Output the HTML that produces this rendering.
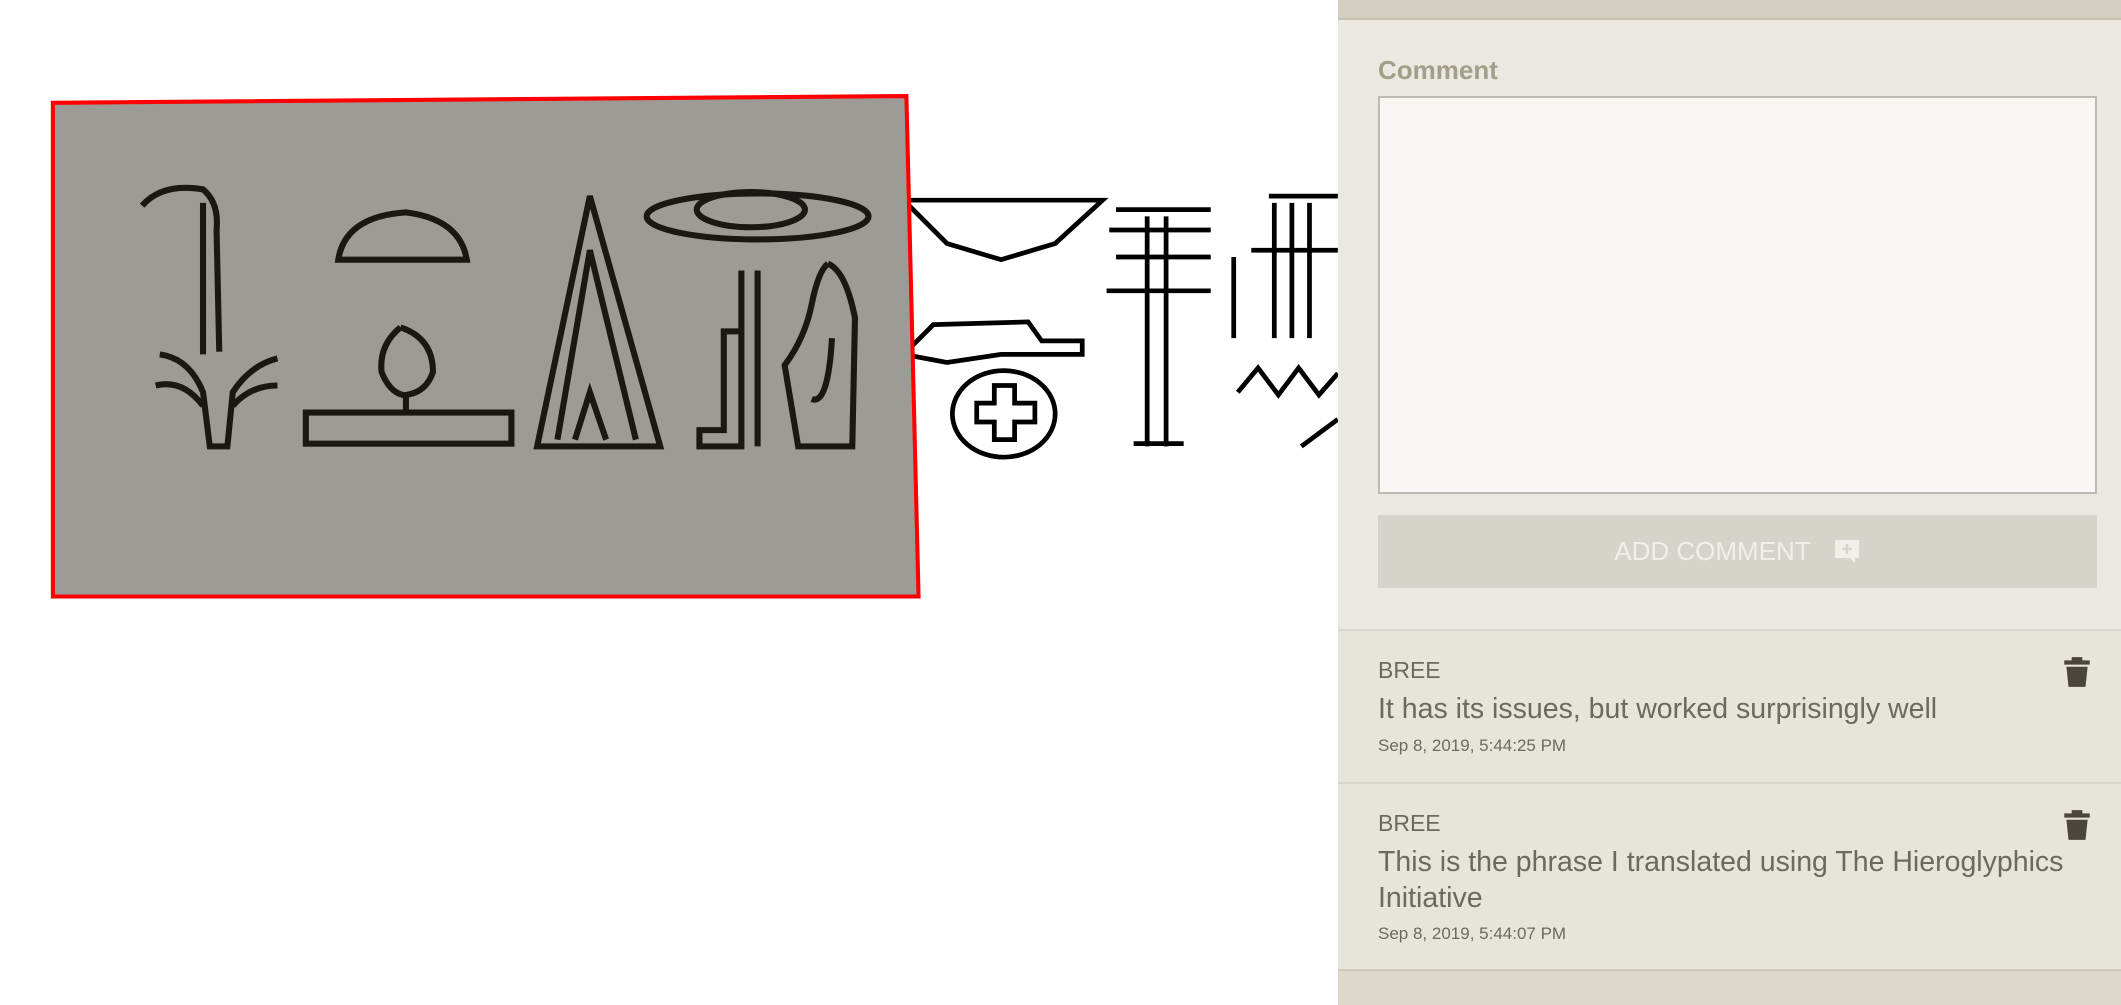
<!DOCTYPE html>
<html><head><meta charset="utf-8"><style>
*{margin:0;padding:0;box-sizing:border-box}
body{width:2121px;height:1005px;overflow:hidden;background:#fff;font-family:"Liberation Sans",sans-serif;position:relative}
#left{position:absolute;left:0;top:0}
#side{position:absolute;left:1338px;top:0;width:783px;height:1005px;background:#ebe8e1}
.topbar{position:absolute;left:0;top:0;width:783px;height:20px;background:#d2cfc0;border-bottom:2px solid #c6c3b3}
.lbl{position:absolute;left:40px;top:55px;font-size:26px;font-weight:bold;color:#a09f88}
.ta{position:absolute;left:40px;top:96px;width:719px;height:398px;background:#f8f7f3;border:2px solid #bcbab3}
.btn{position:absolute;left:40px;top:515px;width:719px;height:73px;background:#d6d3cb;color:#f0efea;font-size:26px;text-align:center;line-height:73px}
.btn svg{vertical-align:-4px;margin-left:22px}
.cm{position:absolute;left:0;width:783px;background:#e7e4dc;border-top:2px solid #d8d5cc;color:#6b6a5e}
.cm .n{position:absolute;left:40px;font-size:23px}
.cm .t{position:absolute;left:40px;font-size:28.5px;line-height:36px;width:710px}
.cm .d{position:absolute;left:40px;font-size:17px}
.cm svg{position:absolute;left:725px}
.bot{position:absolute;left:0;top:969px;width:783px;height:36px;background:#ddd9ca;border-top:2px solid #cdc9b9}
</style></head><body>
<svg id="left" width="1338" height="1005" viewBox="0 0 989 743">
<g fill="none" stroke="#000" stroke-width="3.5">
<path d="M668 148 L815 148 L780 180 L740 192 L700 180 Z"/>
<path d="M690 240 L760 238 L770 252 L800 252 L800 262 L740 262 L700 268 L668 262 Z"/>
<ellipse cx="742" cy="306" rx="38" ry="32"/>
<path d="M735 285 L750 285 L750 298 L765 298 L765 312 L750 312 L750 325 L735 325 L735 312 L722 312 L722 298 L735 298 Z"/>
<path d="M825 155 L895 155 M820 170 L895 170 M825 190 L895 190 M818 215 L895 215 M848 160 L848 330 M862 160 L862 330 M838 328 L875 328"/>
<path d="M938 145 L989 145 M942 150 L942 250 M955 150 L955 250 M968 150 L968 250 M912 190 L912 250 M925 185 L989 185 M915 290 L930 272 L945 292 L960 272 L975 292 L989 276 M962 330 L989 310"/>
</g>
<polygon points="39,76 670,71 679,441 39,441" fill="#9d9b95" stroke="#ff0000" stroke-width="3"/>
<g fill="none" stroke="#1a1814" stroke-width="4.5">
<path d="M105 152 Q120 135 150 140 Q162 150 160 170 L162 260 M150 150 L150 262 M118 262 Q140 265 150 290 L155 330 L168 330 L172 290 Q185 270 205 265 M115 285 Q135 280 150 300 M205 285 Q185 285 172 300"/>
<path d="M250 192 Q255 160 300 157 Q340 162 345 192 Z"/>
<path d="M296 242 Q320 250 320 275 Q315 290 300 292 L300 305 M296 242 Q280 255 282 275 Q288 290 298 292"/>
<rect x="226" y="305" width="152" height="23"/>
<path d="M397 330 L436 145 L488 330 Z M412 325 L436 185 L470 325 M425 325 L436 290 L448 325"/>
<ellipse cx="560" cy="160" rx="82" ry="17"/>
<ellipse cx="555" cy="155" rx="40" ry="13"/>
<path d="M548 200 L548 330 L517 330 L517 318 L535 318 L535 245 L548 245 M560 200 L560 330"/>
<path d="M612 195 Q625 200 632 235 L630 330 L590 330 L580 270 Q595 250 600 225 Q605 200 612 195 M600 295 Q612 300 615 250"/>
</g>
</svg>
<div id="side">
<div class="topbar"></div>
<div class="lbl">Comment</div>
<div class="ta"></div>
<div class="btn">ADD COMMENT<svg width="28" height="26" viewBox="0 0 28 26"><path d="M2 2h24v18h-4v5l-5-5H2z" fill="#f0efea"/><path d="M14 6v10M9 11h10" stroke="#d6d3cb" stroke-width="2.5"/></svg></div>
<div class="cm" style="top:629px;height:153px">
<div class="n" style="top:26px">BREE</div>
<div class="t" style="top:60px">It has its issues, but worked surprisingly well</div>
<div class="d" style="top:105px">Sep 8, 2019, 5:44:25 PM</div>
<svg width="28" height="34" viewBox="0 0 26 32" style="top:24px"><path d="M8 2h10v3h7v4H1V5h7z M3 11h20l-2 19H5z" fill="#4a463c"/></svg>
</div>
<div class="cm" style="top:782px;height:187px">
<div class="n" style="top:26px">BREE</div>
<div class="t" style="top:60px">This is the phrase I translated using The Hieroglyphics Initiative</div>
<div class="d" style="top:140px">Sep 8, 2019, 5:44:07 PM</div>
<svg width="28" height="34" viewBox="0 0 26 32" style="top:24px"><path d="M8 2h10v3h7v4H1V5h7z M3 11h20l-2 19H5z" fill="#4a463c"/></svg>
</div>
<div class="bot"></div>
</div>
</body></html>
